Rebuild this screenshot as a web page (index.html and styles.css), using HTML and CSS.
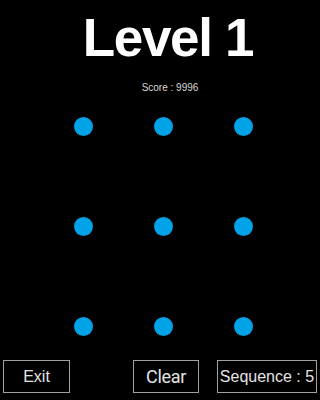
FILE: index.html
```html
<!DOCTYPE html>
<html>
<head>
<meta charset="utf-8">
<link rel="stylesheet" href="styles.css">
</head>
<body>
<div class="screen">
  <header class="header">
    <h1 class="title">Level 1</h1>
    <div class="score">Score : 9996</div>
  </header>
  <div class="grid">
    <span class="dot"></span><span class="dot"></span><span class="dot"></span>
    <span class="dot"></span><span class="dot"></span><span class="dot"></span>
    <span class="dot"></span><span class="dot"></span><span class="dot"></span>
  </div>
  <div class="controls">
    <button class="btn exit">Exit</button>
    <button class="btn clear">Clear</button>
    <button class="btn seq">Sequence : 5</button>
  </div>
</div>
</body>
</html>
```

FILE: styles.css
```css
html, body {
  margin: 0;
  padding: 0;
  background: #000;
}
.screen {
  width: 320px;
  height: 400px;
  background: #000;
  display: flex;
  flex-direction: column;
  font-family: "Liberation Sans", Arial, sans-serif;
}
.header {
  text-align: center;
}
.title {
  margin: 8px 0 0 16px;
  font-size: 53px;
  line-height: 60px;
  letter-spacing: -1.3px;
  font-weight: bold;
  color: #fff;
}
.score {
  margin: 14px 0 0 20px;
  font-size: 10px;
  line-height: 12px;
  color: #d8d8d8;
}
.grid {
  margin-top: 23px;
  padding-left: 74px;
  display: grid;
  grid-template-columns: repeat(3, 19px);
  grid-template-rows: repeat(3, 19px);
  column-gap: 61px;
  row-gap: 81px;
}
.dot {
  width: 19px;
  height: 19px;
  border-radius: 50%;
  background: #00a2e8;
}
.controls {
  margin-top: 24px;
  padding-left: 3px;
  display: flex;
}
.btn {
  box-sizing: border-box;
  height: 33px;
  background: #000;
  border: 1px solid #a0a0a0;
  color: #e4e4e4;
  font-family: "Liberation Sans", Arial, sans-serif;
  font-size: 16px;
  padding: 0;
  display: flex;
  align-items: center;
  justify-content: center;
}
.exit {
  width: 67px;
}
.clear {
  width: 66px;
  margin-left: 63px;
  font-family: Roboto, "Liberation Sans", sans-serif;
  font-size: 18px;
  letter-spacing: -0.3px;
}
.seq {
  width: 100px;
  margin-left: 18px;
}
```
